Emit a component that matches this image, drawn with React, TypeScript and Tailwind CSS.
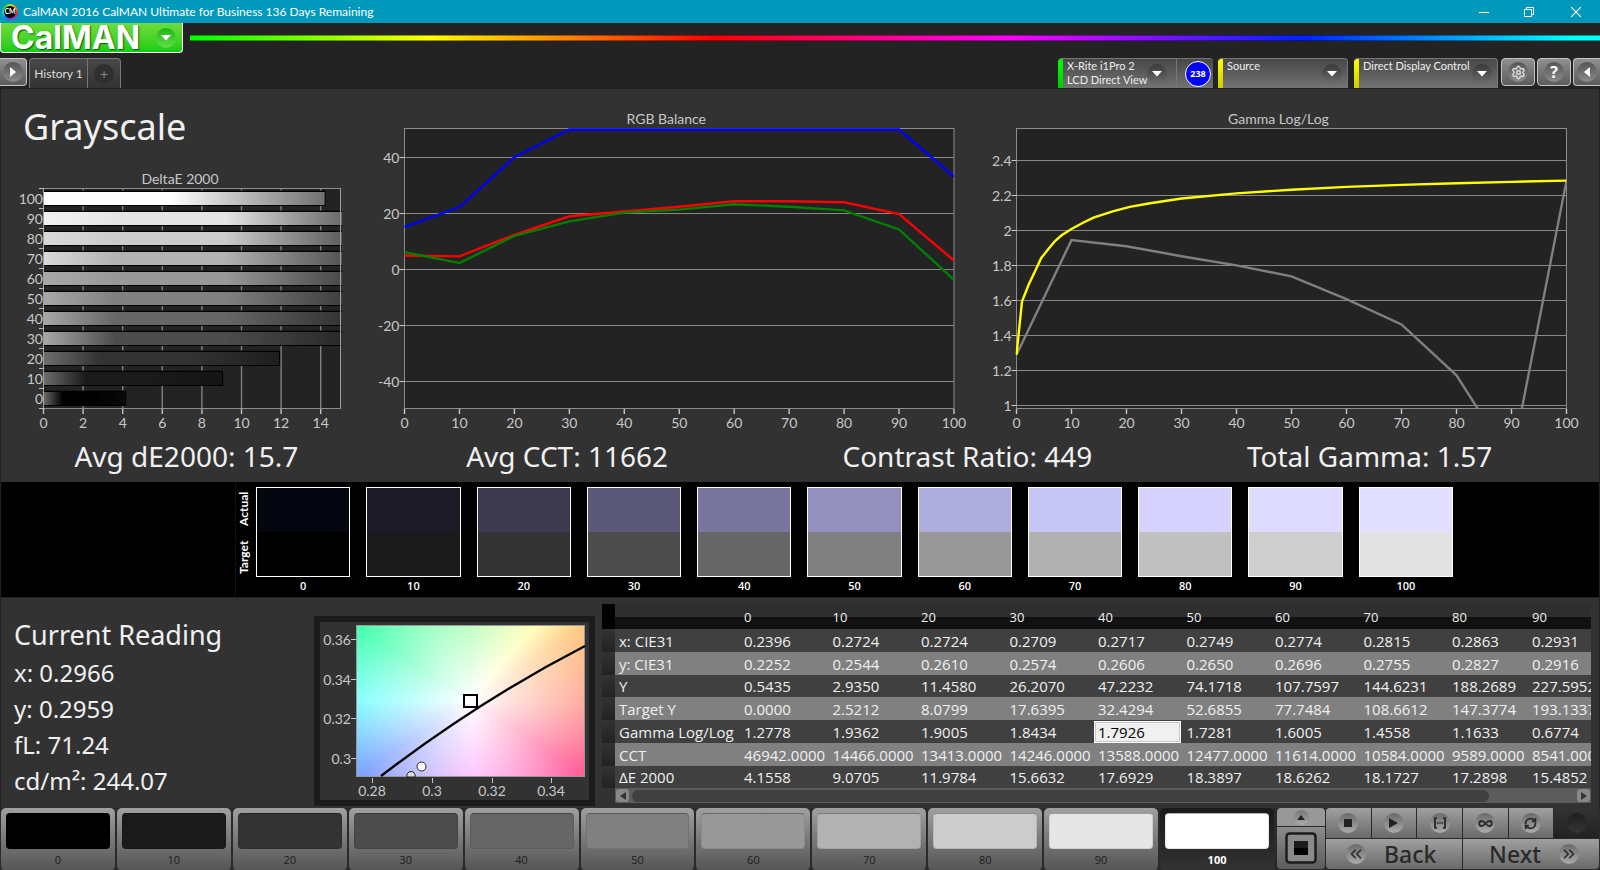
import type { ReactNode } from "react";
import { ChevronsLeft, ChevronsRight, Infinity as Loop, RefreshCw, Settings } from "lucide-react";

const LEVELS = [0, 10, 20, 30, 40, 50, 60, 70, 80, 90, 100];

const GRAYS = [
  "#000000", "#1a1a1a", "#333333", "#4c4c4c", "#666666", "#808080",
  "#999999", "#b2b2b2", "#cccccc", "#e6e6e6", "#ffffff",
];

const SWATCHES = [
  { actual: "#03060f", target: "#000000" },
  { actual: "#1e1b29", target: "#1a1a1a" },
  { actual: "#3d3a50", target: "#333333" },
  { actual: "#5b5878", target: "#4c4c4c" },
  { actual: "#78769c", target: "#666666" },
  { actual: "#9390be", target: "#808080" },
  { actual: "#aeacdd", target: "#999999" },
  { actual: "#c7c5f6", target: "#b0b0b0" },
  { actual: "#d5d2ff", target: "#c0c0c0" },
  { actual: "#dfdaff", target: "#cecece" },
  { actual: "#e2dfff", target: "#e2e2e2" },
];

const DELTA_E = [4.18, 9.07, 11.95, 15.3, 15.3, 15.3, 15.3, 15.3, 15.3, 15.3, 14.25];

const RGB = [
  { color: "#0000ff", values: [15.2, 22.3, 40.1, 50, 50, 50, 50, 50, 50, 50, 33.2] },
  { color: "#ff0000", values: [5, 4.7, 12.4, 19, 20.7, 22.4, 24.4, 24.4, 24, 19.8, 3.2] },
  { color: "#008000", values: [6.2, 2.3, 12, 17.2, 20.3, 21.4, 23.3, 22.4, 21.1, 14.3, -3.7] },
];

const GAMMA_TARGET = [
  [0, 1.29], [1, 1.594], [2.2, 1.69], [3.5, 1.776], [4.5, 1.843], [5.8, 1.894],
  [7, 1.94], [8.2, 1.973], [10, 2.009], [12, 2.043], [14, 2.074], [17.5, 2.109],
  [20.6, 2.135], [24.3, 2.156], [30, 2.183], [40, 2.212], [50, 2.233], [60, 2.249],
  [70, 2.261], [80, 2.27], [90, 2.278], [100, 2.285],
];

const GAMMA_READ = [
  [0, 1.29], [10, 1.945], [20, 1.91], [30, 1.853], [40, 1.801], [50, 1.738],
  [60, 1.608], [70, 1.463], [80, 1.172], [90, 0.68], [100, 2.285],
];

const STATS = [
  "Avg dE2000: 15.7",
  "Avg CCT: 11662",
  "Contrast Ratio: 449",
  "Total Gamma: 1.57",
];

const ROWS = [
  ["x: CIE31", "0.2396", "0.2724", "0.2724", "0.2709", "0.2717", "0.2749", "0.2774", "0.2815", "0.2863", "0.2931"],
  ["y: CIE31", "0.2252", "0.2544", "0.2610", "0.2574", "0.2606", "0.2650", "0.2696", "0.2755", "0.2827", "0.2916"],
  ["Y", "0.5435", "2.9350", "11.4580", "26.2070", "47.2232", "74.1718", "107.7597", "144.6231", "188.2689", "227.5952"],
  ["Target Y", "0.0000", "2.5212", "8.0799", "17.6395", "32.4294", "52.6855", "77.7484", "108.6612", "147.3774", "193.1337"],
  ["Gamma Log/Log", "1.2778", "1.9362", "1.9005", "1.8434", "1.7926", "1.7281", "1.6005", "1.4558", "1.1633", "0.6774"],
  ["CCT", "46942.0000", "14466.0000", "13413.0000", "14246.0000", "13588.0000", "12477.0000", "11614.0000", "10584.0000", "9589.0000", "8541.0000"],
  ["ΔE 2000", "4.1558", "9.0705", "11.9784", "15.6632", "17.6929", "18.3897", "18.6262", "18.1727", "17.2898", "15.4852"],
];

const toPoints = (data: number[][], x: (v: number) => number, y: (v: number) => number) =>
  data.map(([a, b]) => `${x(a)},${y(b)}`).join(" ");

function AxisText({ x, y, anchor = "middle", children }: { x: number; y: number; anchor?: "middle" | "end"; children: ReactNode }) {
  return (
    <text x={x} y={y} textAnchor={anchor} className="fill-[#c8c8c8] text-[14px]">
      {children}
    </text>
  );
}

function DeltaEChart() {
  const x = (v: number) => 42.5 + v * 19.8;
  const y = (i: number) => 29.5 + (10 - i) * 20;
  return (
    <svg viewBox="0 0 370 270" className="block w-full" role="img" aria-label="DeltaE 2000">
      <defs>
        {GRAYS.map((c, i) => (
          <linearGradient key={c} id={`bar${i}`}>
            <stop offset="0" stopColor={i > 9 ? "#ffffff" : i > 8 ? "#f2f2f2" : i > 6 ? "#dadada" : i > 2 ? "#a8a8a8" : "#6e6e6e"} />
            <stop offset="0.24" stopColor={c} />
            <stop offset={i > 9 ? 0.45 : 0.6} stopColor={c} />
            <stop offset="1" stopColor={c} stopOpacity="0.4" />
          </linearGradient>
        ))}
        <clipPath id="deClip">
          <rect x="43" y="19" width="298" height="221" />
        </clipPath>
      </defs>
      <AxisText x={179} y={15}>DeltaE 2000</AxisText>
      <rect x="42.5" y="19.5" width="297" height="220" fill="#232323" stroke="#8c8c8c" />
      {[2, 4, 6, 8, 10, 12, 14].map((t) => (
        <path key={t} d={`M${x(t)} 20V239`} stroke="#808080" strokeWidth="1.4" />
      ))}
      <g clipPath="url(#deClip)">
        {DELTA_E.map((v, i) => (
          <g key={i}>
            <rect x="42" y={y(i) - 8} width={v * 19.8} height="15" fill="#101010" />
            <rect x="42" y={y(i) - 7} width={v * 19.8} height="14" fill={`url(#bar${i})`} stroke="#000" />
          </g>
        ))}
      </g>
      <path d="M42.5 19V245M339.5 19V239" stroke="#a0a0a0" />
      {Array.from({ length: 12 }, (_, i) => (
        <path key={i} d={`M38 ${19.5 + i * 20}H43`} stroke="#c0c0c0" />
      ))}
      {LEVELS.map((l, i) => (
        <AxisText key={l} x={42} y={y(i) + 5} anchor="end">{l}</AxisText>
      ))}
      {[0, 2, 4, 6, 8, 10, 12, 14].map((t) => (
        <g key={t}>
          <path d={`M${x(t)} 240V245`} stroke="#c0c0c0" strokeWidth="1.4" />
          <AxisText x={x(t)} y={259}>{t}</AxisText>
        </g>
      ))}
    </svg>
  );
}

type LineChartProps = {
  id: string;
  title: string;
  left: number;
  width: number;
  ticks: number[];
  y: (v: number) => number;
  lines: { color: string; data: number[][] }[];
};

function LineChart({ id, title, left, width, ticks, y, lines }: LineChartProps) {
  const x = (v: number) => left + (v * width) / 100;
  return (
    <svg viewBox="0 0 614 350" className="block w-full" role="img" aria-label={title}>
      <defs>
        <clipPath id={id}>
          <rect x={left - 1} y="39" width={width + 1} height="281" />
        </clipPath>
      </defs>
      <AxisText x={left + width / 2 - 13} y={35}>{title}</AxisText>
      <rect x={left} y="39.5" width={width} height="280" fill="#232323" stroke="#8c8c8c" />
      {ticks.map((t) => (
        <g key={t}>
          <path d={`M${left} ${y(t)}H${left + width}`} stroke="#888" strokeWidth="1.2" />
          <path d={`M${left - 5} ${y(t)}H${left}`} stroke="#c8c8c8" />
          <AxisText x={left - 5} y={y(t) + 5} anchor="end">{t}</AxisText>
        </g>
      ))}
      <g clipPath={`url(#${id})`} fill="none" strokeWidth="2.4">
        {lines.map((l) => (
          <polyline key={l.color} points={toPoints(l.data, x, y)} stroke={l.color} />
        ))}
      </g>
      {LEVELS.map((t) => (
        <g key={t}>
          <path d={`M${x(t)} 320V325`} stroke="#c8c8c8" strokeWidth="1.4" />
          <AxisText x={x(t)} y={339}>{t}</AxisText>
        </g>
      ))}
    </svg>
  );
}

function ChromaticityChart() {
  return (
    <svg viewBox="0 0 269 178" className="block w-full" role="img" aria-label="CIE chromaticity">
      <foreignObject x="37" y="4" width="228" height="151">
        <div className="relative h-full w-full bg-[conic-gradient(at_50%_49%,#90ff98_0deg,#ffffa0_41deg,#ffc882_57deg,#ff9f90_92deg,#ff6098_123deg,#ffa0ff_177deg,#80a4ff_236deg,#78ffff_270deg,#48ffb0_303deg,#90ff98_360deg)]">
          <div className="h-full w-full bg-[radial-gradient(circle_at_50%_49%,#fff_0px,#ffffff00_130px)]" />
        </div>
      </foreignObject>
      <rect x="36.5" y="3.5" width="228" height="151" fill="none" stroke="#999" />
      {[["0.36", 18], ["0.34", 58], ["0.32", 97], ["0.3", 137]].map(([t, y]) => (
        <g key={t}>
          <path d={`M31 ${Number(y) - 0.5}H36`} stroke="#c8c8c8" />
          <AxisText x={31} y={Number(y) + 5} anchor="end">{t}</AxisText>
        </g>
      ))}
      {[["0.28", 52], ["0.3", 112], ["0.32", 172], ["0.34", 231]].map(([t, x]) => (
        <g key={t}>
          <path d={`M${Number(x) + 0.5} 156V161`} stroke="#c8c8c8" />
          <AxisText x={Number(x)} y={174}>{t}</AxisText>
        </g>
      ))}
      <path d="M61 154C129 102 197 59 265 24" fill="none" stroke="#000" strokeWidth="2.4" />
      <rect x="144" y="73" width="13" height="12" fill="none" stroke="#000" strokeWidth="2" />
      <circle cx="101.500" cy="144.500" r="4.500" fill="#fff" stroke="#222" />
      <path d="M87 155a4.200 4.200 0 1 1 8 0z" fill="#ddd" stroke="#222" />
    </svg>
  );
}

function DownArrow({ green = false }: { green?: boolean }) {
  return (
    <span
      className={
        green
          ? "flex size-5 items-center justify-center rounded-full bg-linear-to-b from-[#12b512] to-[#62e04a]"
          : "flex size-5 items-center justify-center rounded-full bg-linear-to-b from-[#3a3a3a] to-[#6c6c6c]"
      }
    >
      <svg viewBox="0 0 10 6" className="h-[6px] w-[10px]">
        <path d="M0 0h10L5 5.500z" fill="#fff" />
      </svg>
    </span>
  );
}

function DeviceTab({ bar, lines, className }: { bar: string; lines: string[]; className: string }) {
  return (
    <button type="button" className={`flex h-[30px] overflow-hidden rounded-t-[4px] border-t border-r border-[#777] bg-linear-to-b from-[#484848] to-[#737373] text-left ${className}`}>
      <span className={`h-full w-[5px] shrink-0 ${bar}`} />
      <span className="min-w-0 flex-1 pl-1 text-[11px] leading-[14px] whitespace-nowrap text-[#eee]">
        {lines.map((l) => (
          <span key={l} className="block">{l}</span>
        ))}
      </span>
      <span className="mt-[5px] mr-[5px] shrink-0">
        <DownArrow />
      </span>
    </button>
  );
}

function SquareButton({ label, children }: { label: string; children: ReactNode }) {
  return (
    <button type="button" aria-label={label} className="flex h-7 w-[34px] items-center justify-center rounded-[4px] border border-[#c4c4c4] bg-linear-to-b from-[#909090] to-[#5c5c5c]">
      <span className="flex size-5 items-center justify-center rounded-full bg-linear-to-b from-[#555] to-[#8c8c8c] text-white">
        {children}
      </span>
    </button>
  );
}

function RoundIcon({ children }: { children?: ReactNode }) {
  return (
    <span className="flex size-5 shrink-0 items-center justify-center rounded-full bg-linear-to-b from-[#6a6a6a] to-[#acacac] text-[#2a2a2a]">
      {children}
    </span>
  );
}

function TitleBar() {
  return (
    <header className="flex h-[23px] items-center bg-[#0099bc] pl-[2px] font-['Lato','Open_Sans',sans-serif] text-[12px] text-white">
      <span className="flex size-4 items-center justify-center rounded-full bg-[conic-gradient(#d0e020,#ff8020,#e02060,#c020e0,#2060ff,#20d0d0,#20d040,#d0e020)]">
        <span className="flex size-3 items-center justify-center rounded-full bg-black text-[7px] font-bold">CM</span>
      </span>
      <span className="ml-[5px] flex-1">CalMAN 2016 CalMAN Ultimate for Business 136 Days Remaining</span>
      <button type="button" aria-label="Minimize" className="flex w-[45px] justify-center">
        <svg viewBox="0 0 10 10" className="size-[10px]"><path d="M0 5.500h10" stroke="#fff" /></svg>
      </button>
      <button type="button" aria-label="Restore" className="flex w-[45px] justify-center">
        <svg viewBox="0 0 10 10" className="size-[10px]" fill="none" stroke="#fff"><path d="M.5 2.500h7v7h-7zM2.500 2.500v-2h7v7h-2" /></svg>
      </button>
      <button type="button" aria-label="Close" className="flex w-[49px] justify-center">
        <svg viewBox="0 0 10 10" className="size-[10px]"><path d="M0 0l10 10M10 0L0 10" stroke="#fff" strokeWidth="1.1" /></svg>
      </button>
    </header>
  );
}

function Toolbar() {
  return (
    <div className="h-[66px]">
      <div className="flex h-[31px] items-start gap-[7px]">
        <button type="button" className="flex h-[30px] w-[183px] items-center justify-between rounded-b-[4px] border border-t-0 border-white bg-linear-to-b from-[#6cdc3c] to-[#0ccc10] pr-[6px] pl-[10px]">
          <span className="font-['Inter',sans-serif] text-[32px] leading-[28px] font-bold text-white [text-shadow:1px_1px_1px_#0a5a0a]">CalMAN</span>
          <DownArrow green />
        </button>
        <div className="mt-3 h-[6px] flex-1 border-y border-black/40 bg-[linear-gradient(90deg,#0f0_0%,#ff0_17%,#f00_37%,#f0f_58%,#02f_79%,#0ff_98%)]" />
      </div>
      <div className="flex items-start pt-1">
        <button type="button" aria-label="Expand" className="mr-[2px] flex h-7 w-[27px] items-center justify-center rounded-r-[4px] border border-l-0 border-[#c4c4c4] bg-linear-to-b from-[#909090] to-[#5c5c5c]">
          <span className="flex size-5 items-center justify-center rounded-full bg-linear-to-b from-[#555] to-[#8c8c8c]">
            <svg viewBox="0 0 6 10" className="h-[10px] w-[6px]"><path d="M0 0l6 5-6 5z" fill="#fff" /></svg>
          </span>
        </button>
        <div className="flex h-[30px] rounded-t-[4px] border border-b-0 border-[#777] bg-linear-to-b from-[#484848] to-[#333]">
          <button type="button" className="w-[58px] border-r border-[#777] text-[12px] whitespace-nowrap text-[#ddd]">History 1</button>
          <button type="button" aria-label="Add history" className="flex w-8 items-center justify-center">
            <span className="flex size-5 items-center justify-center rounded-full bg-[#303030] text-[14px] leading-none text-[#888]">+</span>
          </button>
        </div>
        <div className="ml-auto flex items-start">
          <div className="mr-[5px] flex">
            <DeviceTab bar="bg-linear-to-b from-[#0f0] to-[#0c0]" lines={["X-Rite i1Pro 2", "LCD Direct View"]} className="w-[119px] rounded-tr-none pr-1" />
            <span className="flex h-[30px] w-9 items-center justify-end rounded-tr-[4px] border-t border-[#777] bg-linear-to-b from-[#484848] to-[#737373] pr-[2px]">
              <span className="flex size-[26px] items-center justify-center rounded-full border border-white bg-[#0000ff] font-['Open_Sans',sans-serif] text-[9px] font-bold text-white">238</span>
            </span>
          </div>
          <DeviceTab bar="bg-linear-to-b from-[#ff0] to-[#cc0]" lines={["Source"]} className="mr-[6px] w-[130px]" />
          <DeviceTab bar="bg-linear-to-b from-[#ff0] to-[#cc0]" lines={["Direct Display Control"]} className="mr-[3px] w-[144px]" />
          <div className="flex gap-[2px]">
            <SquareButton label="Settings"><Settings size={15} strokeWidth={2.5} color="#d4d4d4" /></SquareButton>
            <SquareButton label="Help"><span className="font-['Open_Sans',sans-serif] text-[16px] leading-none font-bold">?</span></SquareButton>
            <button type="button" aria-label="Collapse" className="flex h-7 w-[27px] items-center justify-center rounded-l-[4px] border border-r-0 border-[#c4c4c4] bg-linear-to-b from-[#909090] to-[#5c5c5c]">
              <span className="flex size-5 items-center justify-center rounded-full bg-linear-to-b from-[#555] to-[#8c8c8c]">
                <svg viewBox="0 0 6 10" className="h-[10px] w-[6px]"><path d="M6 0L0 5l6 5z" fill="#fff" /></svg>
              </span>
            </button>
          </div>
        </div>
      </div>
    </div>
  );
}

function Charts() {
  return (
    <section>
      <div className="grid grid-cols-[370fr_614fr_614fr]">
        <div>
          <h1 className="h-20 pt-4 pl-[22px] font-['Noto_Sans',sans-serif] text-[36px] leading-[44px] text-[#f0f0f0]">Grayscale</h1>
          <DeltaEChart />
        </div>
        <LineChart
          id="rgbClip"
          title="RGB Balance"
          left={33.5}
          width={549.5}
          ticks={[40, 20, 0, -20, -40]}
          y={(v) => 180.5 - v * 2.8}
          lines={RGB.map((c) => ({ color: c.color, data: c.values.map((v, i) => [i * 10, v]) }))}
        />
        <LineChart
          id="gammaClip"
          title="Gamma Log/Log"
          left={31.5}
          width={550}
          ticks={[2.4, 2.2, 2, 1.8, 1.6, 1.4, 1.2, 1]}
          y={(v) => 106.5 + (2.2 - v) * 175}
          lines={[
            { color: "#808080", data: GAMMA_READ },
            { color: "#ffff00", data: GAMMA_TARGET },
          ]}
        />
      </div>
      <div className="grid h-[43px] grid-cols-[371fr_391fr_410fr_395fr] pr-8 text-center font-['Noto_Sans',sans-serif] text-[28px] leading-[34px] text-[#f0f0f0]">
        {STATS.map((s) => (
          <p key={s}>{s}</p>
        ))}
      </div>
    </section>
  );
}

function SwatchBand() {
  return (
    <section className="flex h-[115px] bg-black pr-[130px] pl-[234px] text-white">
      <div className="mr-1 flex w-[17px] flex-col border-l border-[#111] pt-[3px] text-[12px] font-bold">
        <span className="flex h-12 rotate-180 items-center justify-center self-center [writing-mode:vertical-rl]">Actual</span>
        <span className="flex h-12 rotate-180 items-center justify-center self-center [writing-mode:vertical-rl]">Target</span>
      </div>
      <div className="grid flex-1 grid-cols-11 pt-[5px]">
        {SWATCHES.map((s, i) => (
          <div key={i} className="pr-4 font-['Open_Sans','Noto_Sans',sans-serif] text-[11px] leading-[18px] font-semibold">
            <div className="h-[90px] border border-white">
              <div className="h-1/2" style={{ backgroundColor: s.actual }} />
              <div className="h-1/2" style={{ backgroundColor: s.target }} />
            </div>
            <p className="text-center">{LEVELS[i]}</p>
          </div>
        ))}
      </div>
    </section>
  );
}

function ReadingTable() {
  return (
    <div className="min-w-0 flex-1 overflow-hidden pt-[6px] font-['Open_Sans','Noto_Sans',sans-serif] text-[15px] text-[#f0f0f0]">
      <table className="w-full table-fixed border-collapse text-left leading-[22px]">
        <colgroup>
          <col className="w-[13px]" />
          <col className="w-[125px]" />
          {LEVELS.slice(0, 8).map((l) => (
            <col key={l} />
          ))}
          <col className="w-20" />
          <col className="w-[63px]" />
        </colgroup>
        <thead>
          <tr className="h-[25px] bg-linear-to-b from-[#2e2e2e] from-50% to-[#111] to-52% text-[13px]">
            <td className="bg-black" />
            <td />
            {LEVELS.slice(0, 10).map((l) => (
              <th key={l} scope="col" className="p-0 pl-1 font-medium">{l}</th>
            ))}
          </tr>
        </thead>
        <tbody>
          {ROWS.map(([label, ...cells], r) => (
            <tr key={label} className={`${r % 2 ? "bg-[#808080]" : "bg-[#404040]"} ${r % 4 === 2 ? "h-[22px]" : "h-[23px]"}`}>
              <td className="bg-linear-to-b from-[#333] to-[#222] p-0" />
              <th scope="row" className="p-0 pl-1 font-normal whitespace-nowrap">{label}</th>
              {cells.map((c, i) =>
                r === 4 && i === 4 ? (
                  <td key={i} className="p-0">
                    <input
                      aria-label="Gamma Log/Log at 40"
                      defaultValue={c}
                      className="block h-[22px] w-[87px] border border-white bg-[#f0f0f0] pl-[3px] text-black inset-ring inset-ring-[#c8c8c8]"
                    />
                  </td>
                ) : (
                  <td key={i} className="p-0 pl-1 whitespace-nowrap">{c}</td>
                ),
              )}
            </tr>
          ))}
        </tbody>
      </table>
      <div className="ml-[13px] flex h-[15px] items-center gap-[3px] bg-[#5c5c5c] px-px">
        <button type="button" aria-label="Scroll left" className="flex size-[13px] items-center justify-center rounded-[3px] bg-[#888]">
          <svg viewBox="0 0 6 8" className="h-2 w-[6px]"><path d="M6 0L0 4l6 4z" fill="#333" /></svg>
        </button>
        <div className="flex-1">
          <div className="h-3 w-[91%] rounded-full bg-[#404040]" />
        </div>
        <button type="button" aria-label="Scroll right" className="flex size-[13px] items-center justify-center rounded-[3px] bg-[#888]">
          <svg viewBox="0 0 6 8" className="h-2 w-[6px]"><path d="M0 0l6 4-6 4z" fill="#333" /></svg>
        </button>
      </div>
    </div>
  );
}

function Readings() {
  return (
    <section className="flex min-h-[211px] flex-1 border-t border-[#222] pr-2">
      <div className="w-[313px] pt-[19px] pl-[13px] font-['Noto_Sans',sans-serif] text-[24px] leading-[36px] text-[#f0f0f0]">
        <h2 className="mb-[2px] text-[27px]">Current Reading</h2>
        <p>x: 0.2966</p>
        <p>y: 0.2959</p>
        <p>fL: 71.24</p>
        <p>cd/m²: 244.07</p>
      </div>
      <div className="mt-[18px] mr-[7px] h-[190px] w-[281px] border-[6px] border-[#1b1b1b] bg-[#323232]">
        <ChromaticityChart />
      </div>
      <ReadingTable />
    </section>
  );
}

function BottomBar() {
  const cell = "flex items-center bg-linear-to-b from-[#a0a0a0] to-[#6a6a6a]";
  return (
    <footer className="flex h-[62px] gap-[3px] bg-[#2a2a2a] pr-px pb-px pl-px">
      <div className="grid flex-1 grid-cols-11 gap-[2px]">
        {LEVELS.map((l, i) => (
          <button
            key={l}
            type="button"
            className={
              l === 100
                ? "rounded-[5px] bg-linear-to-b from-[#1a1a1a] to-[#333] px-[5px] pt-[5px] text-[11px] leading-[22px] font-bold text-white"
                : "rounded-[5px] bg-linear-to-b from-[#a0a0a0] to-[#545454] px-[5px] pt-[5px] text-[11px] leading-[22px] text-[#1c1c1c]"
            }
          >
            <span
              className="block h-9 rounded-[4px] border border-black/10 border-t-black/30"
              style={{ backgroundColor: GRAYS[i] }}
            />
            <span className="block font-['Open_Sans',sans-serif]">{l}</span>
          </button>
        ))}
      </div>
      <div className="flex w-12 flex-col gap-px">
        <button type="button" aria-label="Open" className="flex h-[18px] items-center justify-center rounded-t-[4px] bg-[#989898]">
          <span className="flex size-[15px] items-center justify-center rounded-full bg-linear-to-b from-[#777] to-[#aaa]">
            <svg viewBox="0 0 8 5" className="h-[5px] w-2"><path d="M0 5l4-5 4 5z" fill="#222" /></svg>
          </span>
        </button>
        <button type="button" aria-label="Pattern window" className="flex flex-1 items-center justify-center rounded-b-[4px] bg-linear-to-b from-[#8c8c8c] to-[#5c5c5c]">
          <svg viewBox="0 0 32 32" className="size-8">
            <rect x="1.500" y="1.500" width="29" height="29" rx="3" fill="#8a8a8a" stroke="#1c1c1c" strokeWidth="2.500" />
            <rect x="9" y="9" width="14" height="14" fill="#000" />
            <rect x="9" y="9" width="14" height="7" fill="#1c1c1c" />
          </svg>
        </button>
      </div>
      <div className="-ml-[2px] flex w-[273px] flex-col gap-px">
        <div className="grid h-[30px] grid-cols-6 gap-px">
          <button type="button" aria-label="Stop" className={`${cell} justify-center rounded-tl-[4px]`}>
            <RoundIcon><span className="size-2 bg-[#222]" /></RoundIcon>
          </button>
          <button type="button" aria-label="Read" className={`${cell} justify-center`}>
            <RoundIcon><svg viewBox="0 0 9 10" className="h-[10px] w-[9px]"><path d="M0 0l9 5-9 5z" fill="#222" /></svg></RoundIcon>
          </button>
          <button type="button" aria-label="Read series" className={`${cell} justify-center`}>
            <RoundIcon>
              <svg viewBox="0 0 12 12" className="size-3" fill="none" stroke="#222" strokeWidth="1.700">
                <path d="M3 1H1v10h2M9 1h2v10H9M3 6h1.500M5.300 6h1.400M7.500 6H9" />
              </svg>
            </RoundIcon>
          </button>
          <button type="button" aria-label="Read continuous" className={`${cell} justify-center`}>
            <RoundIcon><Loop size={15} strokeWidth={3} /></RoundIcon>
          </button>
          <button type="button" aria-label="Refresh" className={`${cell} justify-center`}>
            <RoundIcon><RefreshCw size={13} strokeWidth={3.5} /></RoundIcon>
          </button>
          <button type="button" aria-label="Record" className="flex items-center justify-center rounded-tr-[4px] bg-linear-to-b from-[#333] to-[#222]">
            <span className="size-5 rounded-full bg-linear-to-b from-[#1e1e1e] to-[#363636]" />
          </button>
        </div>
        <div className="grid flex-1 grid-cols-2 gap-px font-['Noto_Sans','Open_Sans',sans-serif] text-[23px] leading-[28px] font-medium text-[#2a2a2a]">
          <button type="button" className={`${cell} justify-start gap-[18px] rounded-bl-[4px] pl-5`}>
            <RoundIcon><ChevronsLeft size={18} strokeWidth={2.2} /></RoundIcon>
            Back
          </button>
          <button type="button" className={`${cell} justify-end gap-[18px] rounded-br-[4px] pr-5`}>
            Next
            <RoundIcon><ChevronsRight size={18} strokeWidth={2.2} /></RoundIcon>
          </button>
        </div>
      </div>
    </footer>
  );
}

export default function App() {
  return (
    <div className="flex min-h-screen flex-col overflow-hidden bg-[#232323] font-['Lato','Open_Sans',sans-serif]">
      <TitleBar />
      <Toolbar />
      <main className="flex flex-1 flex-col border-x border-[#222] bg-[#323232]">
        <Charts />
        <SwatchBand />
        <Readings />
      </main>
      <BottomBar />
    </div>
  );
}
